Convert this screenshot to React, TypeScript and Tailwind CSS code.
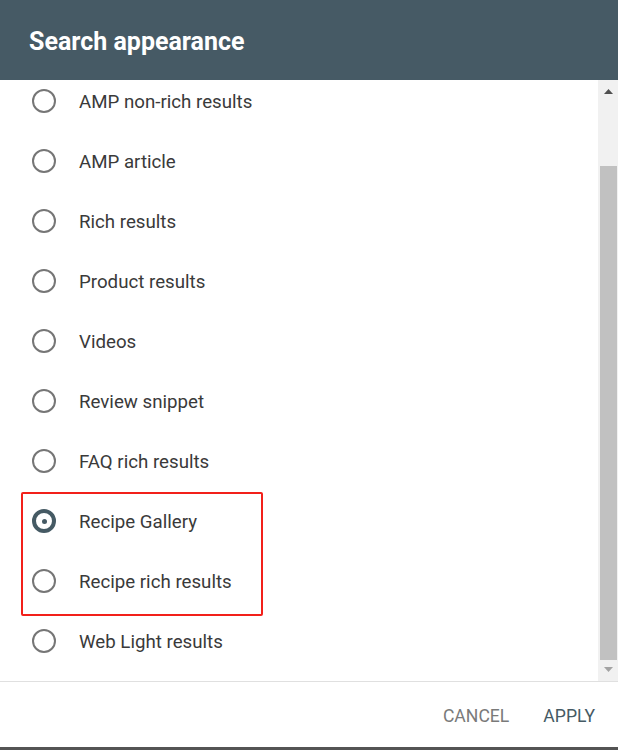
import React, { useState } from "react";

const options = [
  "AMP non-rich results",
  "AMP article",
  "Rich results",
  "Product results",
  "Videos",
  "Review snippet",
  "FAQ rich results",
  "Recipe Gallery",
  "Recipe rich results",
  "Web Light results",
];

const Radio = ({ checked }: { checked: boolean }) =>
  checked ? (
    <span className="flex h-[24px] w-[24px] shrink-0 items-center justify-center rounded-full border-4 border-[#455a64]">
      <span className="h-[5px] w-[5px] rounded-full bg-[#455a64]" />
    </span>
  ) : (
    <span className="h-[24px] w-[24px] shrink-0 rounded-full border-[2.5px] border-[#767676]" />
  );

const Row = ({
  label,
  checked,
  onPick,
}: {
  label: string;
  checked: boolean;
  onPick: () => void;
}) => (
  <div
    className="flex h-[60px] cursor-pointer items-center gap-[23px] pl-[32px]"
    onClick={onPick}
  >
    <Radio checked={checked} />
    <span className="pt-[2px] text-[18.7px] text-[#3a3a3a]">{label}</span>
  </div>
);

export default function App() {
  const [picked, setPicked] = useState("Recipe Gallery");

  const top = options.slice(0, 7);
  const boxed = options.slice(7, 9);
  const rest = options.slice(9);

  return (
    <div className="flex h-[750px] w-[618px] flex-col bg-white font-['Roboto',sans-serif]">
      <div className="flex h-[80px] shrink-0 items-center bg-[#465a65] px-[29px] pt-[3px]">
        <h1 className="text-[25px] font-bold text-white">Search appearance</h1>
      </div>

      <div className="flex h-[601px] shrink-0">
        <div className="flex-1 overflow-hidden">
          <div className="-mt-[9px]">
            {top.map((o) => (
              <Row key={o} label={o} checked={picked === o} onPick={() => setPicked(o)} />
            ))}
            <div className="relative">
              {boxed.map((o) => (
                <Row key={o} label={o} checked={picked === o} onPick={() => setPicked(o)} />
              ))}
              {/* highlight annotation */}
              <div className="pointer-events-none absolute left-[21px] top-[1px] h-[124px] w-[242px] rounded-[2px] border-2 border-[#f2201a]" />
            </div>
            {rest.map((o) => (
              <Row key={o} label={o} checked={picked === o} onPick={() => setPicked(o)} />
            ))}
          </div>
        </div>

        {/* scrollbar */}
        <div className="flex w-[20px] shrink-0 flex-col bg-[#f1f1f1]">
          <div className="flex h-[22px] items-center justify-center pl-[1px]">
            <svg width="9" height="5" viewBox="0 0 9 5">
              <path d="M0 5 L4.5 0 L9 5 Z" fill="#505050" />
            </svg>
          </div>
          <div className="h-[64px]" />
          <div className="ml-[2px] h-[494px] w-[17px] bg-[#c1c1c1]" />
          <div className="flex flex-1 justify-center pl-[1px] pt-[7px]">
            <svg width="9" height="5" viewBox="0 0 9 5">
              <path d="M0 0 L9 0 L4.5 5 Z" fill="#a3a3a3" />
            </svg>
          </div>
        </div>
      </div>

      <div className="flex h-[66px] shrink-0 items-center justify-end gap-[34px] border-t border-[#e0e0e0] pr-[23px] pt-[3px]">
        <button className="text-[17.6px] text-[#7a7a7a]">CANCEL</button>
        <button className="text-[17.6px] text-[#455a64]">APPLY</button>
      </div>

      <div className="h-[3px] shrink-0 bg-[#545454]" />
    </div>
  );
}
